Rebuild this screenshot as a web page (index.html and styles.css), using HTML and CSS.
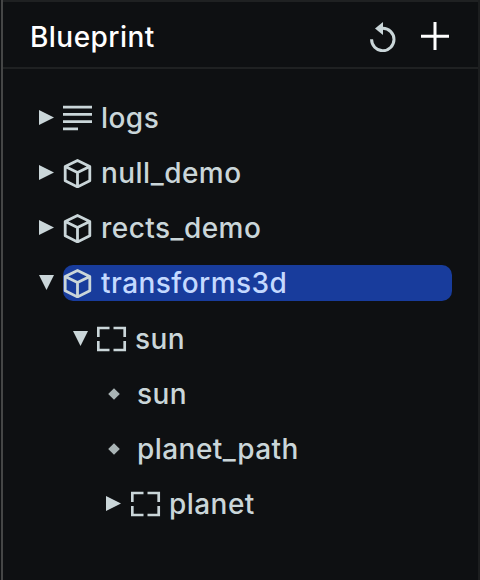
FILE: index.html
```
<!DOCTYPE html>
<html lang="en">
<head>
<meta charset="utf-8">
<title>Blueprint</title>
<link rel="stylesheet" href="styles.css">
</head>
<body>
<svg class="defs" width="0" height="0">
  <symbol id="right" viewBox="0 0 15 15"><path d="M0 0L15 7.5L0 15Z" fill="currentColor"/></symbol>
  <symbol id="down" viewBox="0 0 15 15"><path d="M0 0H15L7.5 15Z" fill="currentColor"/></symbol>
  <symbol id="log" viewBox="0 0 30 30"><path d="M0 4.2H29M0 11.4H29M0 18.7H29M0 25.9H15" stroke="currentColor" stroke-width="2.8"/></symbol>
  <symbol id="cube" viewBox="0 0 30 30"><path d="M14.5 2.4L26.8 8.4V22.8L14.5 28.9L2.2 22.8V8.4ZM2.2 8.4L14.5 14.6L26.8 8.4M14.5 14.6V28.9" fill="none" stroke="currentColor" stroke-width="2.8" stroke-linejoin="round"/></symbol>
  <symbol id="frame" viewBox="0 0 30 30"><path d="M1.3 13V4H12.5M16.5 4H27.7V13M27.7 17V26H16.5M12.5 26H1.3V17" fill="none" stroke="currentColor" stroke-width="2.7"/></symbol>
  <symbol id="diamond" viewBox="0 0 12 12"><path d="M6 .2L11.8 6L6 11.8L.2 6Z" fill="currentColor"/></symbol>
</svg>
<div class="panel">
  <header class="header">
    <h1 class="title">Blueprint</h1>
    <svg class="reset" width="26" height="30" viewBox="0 0 26 30"><path d="M1.6 17.2A11.2 11.2 0 1 0 12.8 6.3" fill="none" stroke="currentColor" stroke-width="3"/><path d="M13 0V13L5 6.5Z" fill="currentColor"/></svg>
    <svg class="add" width="28" height="28" viewBox="0 0 28 28"><path d="M0 14.3H28M14 0V28" stroke="currentColor" stroke-width="3"/></svg>
  </header>
  <ul class="tree">
    <li class="row"><svg class="arrow"><use href="#right"/></svg><div class="item"><svg class="icon"><use href="#log"/></svg><span>logs</span></div></li>
    <li class="row"><svg class="arrow"><use href="#right"/></svg><div class="item"><svg class="icon"><use href="#cube"/></svg><span>null_demo</span></div></li>
    <li class="row"><svg class="arrow"><use href="#right"/></svg><div class="item"><svg class="icon"><use href="#cube"/></svg><span>rects_demo</span></div></li>
    <li class="row"><svg class="arrow"><use href="#down"/></svg><div class="item selected"><svg class="icon"><use href="#cube"/></svg><span>transforms3d</span></div></li>
    <li class="row level-1"><svg class="arrow"><use href="#down"/></svg><div class="item"><svg class="icon"><use href="#frame"/></svg><span>sun</span></div></li>
    <li class="row level-2"><svg class="dot"><use href="#diamond"/></svg><span>sun</span></li>
    <li class="row level-2"><svg class="dot"><use href="#diamond"/></svg><span>planet_path</span></li>
    <li class="row level-2"><svg class="arrow"><use href="#right"/></svg><div class="item"><svg class="icon"><use href="#frame"/></svg><span>planet</span></div></li>
  </ul>
</div>
</body>
</html>
```
FILE: styles.css
```
* { box-sizing: border-box; }
body {
  margin: 0;
  background: #0e1012;
  font-family: Inter, sans-serif;
  font-size: 28px;
  font-weight: 500;
  letter-spacing: 0.45px;
  color: #cad6d9;
}
.defs { display: block; }
svg { display: block; flex: none; }
.panel {
  height: 580px;
  margin-left: 1px;
  border-left: 2px solid #454646;
  border-right: 2px solid #1c1e1f;
  overflow: hidden;
}
.header {
  display: flex;
  align-items: center;
  height: 69px;
  padding: 4px 29px 0 27px;
  border-top: 2px solid #1f2122;
  border-bottom: 2px solid #1f2122;
}
.title {
  margin: 0 auto 0 0;
  font-size: 28px;
  font-weight: 500;
  color: #fff;
}
.reset { margin-right: 25px; }
.add { margin-bottom: 2px; color: #fff; }
.tree {
  margin: 0;
  padding: 21px 26px 0 36px;
  list-style: none;
}
.row {
  display: flex;
  align-items: center;
  height: 55px;
}
.arrow { width: 15px; height: 15px; margin-right: 9px; }
.item {
  display: flex;
  align-items: center;
  flex: 1;
  height: 36px;
  border-radius: 10px;
}
.selected { background: #183c9c; color: #c4d9ff; }
.icon { width: 30px; height: 30px; margin-right: 8px; color: #cad6d9; }
.level-1 { margin-top: 1px; padding-left: 34px; }
.level-2 { padding-left: 67px; }
.level-2 .item { padding-left: 1px; }
.dot { width: 12px; height: 12px; margin: 0 17px 0 2px; color: #a9b4b5; }
```
